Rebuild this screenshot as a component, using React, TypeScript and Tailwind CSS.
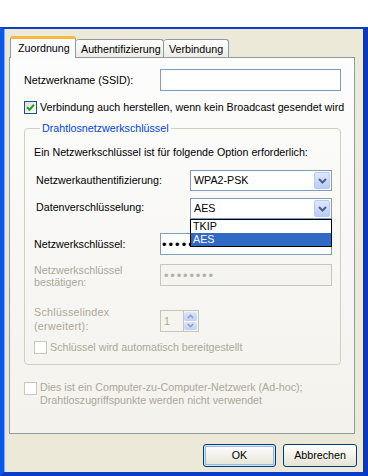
import React from "react";

const Chevron = ({ up = false, color = "#4D6185", w = 9, h = 6 }: { up?: boolean; color?: string; w?: number; h?: number }) => (
  <svg width={w} height={h} viewBox="0 0 9 6">
    <path d={up ? "M1 5 L4.5 1.5 L8 5" : "M1 1 L4.5 4.5 L8 1"} stroke={color} strokeWidth="2" fill="none" />
  </svg>
);

function Checkbox({ checked = false, disabled = false }: { checked?: boolean; disabled?: boolean }) {
  return (
    <div
      className={
        disabled
          ? "w-[13px] h-[13px] shrink-0 border border-[#CAC8BB] bg-white flex items-center justify-center"
          : "w-[13px] h-[13px] shrink-0 border border-[#1C5180] bg-linear-to-br from-[#DCDCD7] to-white flex items-center justify-center"
      }
    >
      {checked && (
        <svg width="9" height="9" viewBox="0 0 9 9">
          <path d="M1 4.2 L3.5 6.7 L8 1.8" stroke="#21A121" strokeWidth="2" fill="none" />
        </svg>
      )}
    </div>
  );
}

function Combo({ value }: { value: string }) {
  return (
    <div className="w-[142px] h-[21px] border border-[#7F9DB9] bg-white flex items-center p-[1px]">
      <span className="flex-1 pl-[2px] leading-[13px]">{value}</span>
      <div className="w-[16px] h-full rounded-[2px] border border-[#B5C8F6] bg-linear-to-b from-[#DFE8FE] to-[#B9CCFA] flex items-center justify-center">
        <Chevron />
      </div>
    </div>
  );
}

export default function App() {
  return (
    <div className="w-[368px] h-[476px] bg-white flex flex-col font-[family-name:Liberation_Sans,Arial,sans-serif] text-[10.7px] text-black leading-[13px] whitespace-nowrap">
      <div className="h-[27px] shrink-0" />
      <div className="flex-1 flex flex-col border-t-2 border-t-[#0A3FC8] border-l-4 border-l-[#0B57E5] border-r-[5px] border-r-[#0A38C4] border-b-4 border-b-[#0A3CC9] bg-[#ECE9D8] shadow-[inset_1px_0_0_#8FA9E6]">
        {/* tabs */}
        <div className="mt-[7px] ml-[6px] h-[21px] flex items-end shrink-0">
          <div className="relative z-10 w-[66px] h-[22px] -mb-[1px] border-x border-[#919B9C] border-t-[3px] border-t-[#F5B940] rounded-t-[3px] bg-[#FCFCFE] flex items-start pt-[3px] pl-[7px]">
            Zuordnung
          </div>
          <div className="w-[88px] h-[18px] border-t border-r border-[#919B9C] rounded-t-[3px] bg-linear-to-b from-white to-[#ECEBE6] pl-[5px] pt-[3px]">
            Authentifizierung
          </div>
          <div className="w-[65px] h-[18px] border-t border-r border-[#919B9C] rounded-t-[3px] bg-linear-to-b from-white to-[#ECEBE6] pl-[5px] pt-[3px]">
            Verbindung
          </div>
        </div>

        {/* panel */}
        <div className="relative ml-[5px] mr-[8px] h-[377px] shrink-0 border border-[#919B9C] bg-linear-to-b from-[#FDFDFD] to-[#F3F2EC] pl-[14px] pr-[13px] flex flex-col">
          <div className="mt-[11px] h-[22px] flex items-center justify-between">
            <span>Netzwerkname (SSID):</span>
            <div className="w-[181px] h-[22px] border border-[#7F9DB9] bg-white" />
          </div>

          <div className="mt-[10px] flex items-center gap-[3px]">
            <Checkbox checked />
            <span>Verbindung auch herstellen, wenn kein Broadcast gesendet wird</span>
          </div>

          <fieldset className="mt-[8px] border border-[#D0D0BF] rounded-[4px] pl-[9px] pr-[8px] pb-[10px]">
            <legend className="ml-[6px] px-[2px] text-[#0046D5] leading-[13px]">Drahtlosnetzwerkschlüssel</legend>
            <div className="mt-[11px]">Ein Netzwerkschlüssel ist für folgende Option erforderlich:</div>

            <div className="mt-[11px] flex items-center">
              <span className="w-[156px] pl-[2px]">Netzwerkauthentifizierung:</span>
              <Combo value="WPA2-PSK" />
            </div>
            <div className="mt-[7px] flex items-center">
              <span className="w-[156px] pl-[2px] pb-[3px]">Datenverschlüsselung:</span>
              <Combo value="AES" />
            </div>

            <div className="mt-[14px] flex items-center">
              <span className="w-[126px]">Netzwerkschlüssel:</span>
              <div className="w-[172px] h-[22px] border border-[#7F9DB9] bg-white flex items-center pl-[1px] overflow-hidden">
                <span className="text-[13px] tracking-[2px] leading-[13px]">••••••••</span>
              </div>
            </div>

            <div className="mt-[9px] flex items-start">
              <span className="w-[126px] leading-[12px] text-[#ACA899]">
                Netzwerkschlüssel
                <br />
                bestätigen:
              </span>
              <div className="w-[172px] h-[22px] border border-[#C9C7BA] bg-[#F5F4EF] flex items-center pl-[3px] overflow-hidden">
                <span className="text-[13px] tracking-[1.8px] leading-[13px] text-[#B4B1A6]">••••••••</span>
              </div>
            </div>

            <div className="mt-[17px] flex items-start">
              <span className="w-[126px] leading-[14px] text-[#ACA899] tracking-[0.3px]">
                Schlüsselindex
                <br />
                (erweitert):
              </span>
              <div className="mt-[5px] flex h-[22px]">
                <div className="w-[24px] h-full border border-[#C9C7BA] bg-[#F5F4EF] text-[#ACA899] pl-[3px] flex items-center">1</div>
                <div className="w-[15px] h-full flex flex-col gap-[1px] py-[1px] pr-[1px] border-y border-r border-[#C9C7BA] bg-[#F5F4EF]">
                  <div className="flex-1 rounded-[2px] bg-linear-to-b from-[#DCE5FA] to-[#C0D0F4] flex items-center justify-center">
                    <Chevron up color="#8C9FCF" w={7} h={5} />
                  </div>
                  <div className="flex-1 rounded-[2px] bg-linear-to-b from-[#DCE5FA] to-[#C0D0F4] flex items-center justify-center">
                    <Chevron color="#8C9FCF" w={7} h={5} />
                  </div>
                </div>
              </div>
            </div>

            <div className="mt-[8px] flex items-center gap-[3px]">
              <Checkbox disabled />
              <span className="text-[#ACA899]">Schlüssel wird automatisch bereitgestellt</span>
            </div>
          </fieldset>

          <div className="mt-[16px] flex items-start gap-[3px] text-[#ACA899]">
            <div className="mt-[1px]">
              <Checkbox disabled />
            </div>
            <span>
              Dies ist ein Computer-zu-Computer-Netzwerk (Ad-hoc);
              <br />
              Drahtloszugriffspunkte werden nicht verwendet
            </span>
          </div>

          {/* dropdown list */}
          <div className="absolute left-[180px] top-[161px] w-[142px] h-[28px] border border-black bg-white flex flex-col z-20">
            <div className="h-[13px] pl-[2px] leading-[13px]">TKIP</div>
            <div className="h-[13px] pl-[2px] leading-[13px] bg-[#316AC5] text-white">AES</div>
          </div>
        </div>

        {/* buttons */}
        <div className="mt-[10px] mr-[6px] flex justify-end gap-[7px]">
          <button className="w-[73px] h-[23px] rounded-[3px] border border-[#003C74] bg-linear-to-b from-white to-[#E6E3D6] shadow-[inset_0_0_0_1px_#CEE7FF,inset_0_0_0_2px_#98B8EA] text-center">
            OK
          </button>
          <button className="w-[74px] h-[23px] rounded-[3px] border border-[#003C74] bg-linear-to-b from-white to-[#E6E3D6] text-center">
            Abbrechen
          </button>
        </div>
      </div>
    </div>
  );
}
